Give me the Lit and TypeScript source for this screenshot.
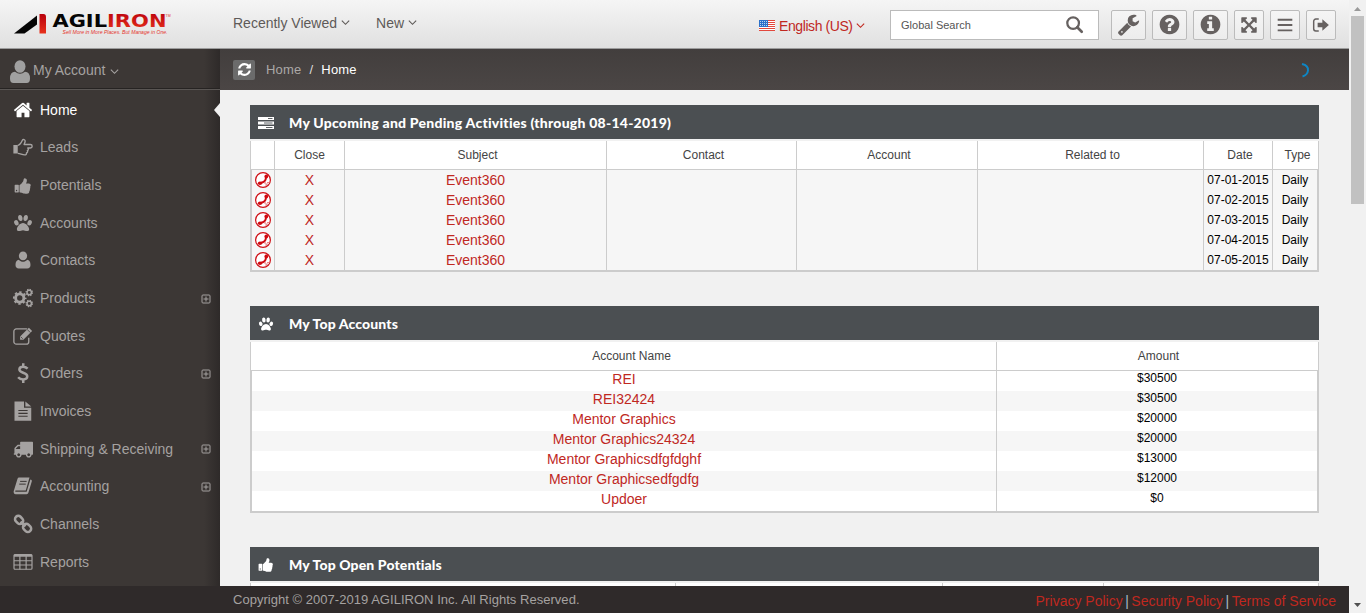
import { LitElement, html, css, svg } from "lit";
import { customElement } from "lit/decorators.js";

const fa = (d: string) => svg`<g transform="scale(.0089286)"><path d=${d}/></g>`;
const disc = "M1664 896q0 209-103 385.5t-279.5 279.5-385.5 103-385.5-103-279.5-279.5-103-385.5 103-385.5 279.5-279.5 385.5-103 385.5 103 279.5 279.5 103 385.5z";

// Every glyph is drawn on a 16 x 16 grid.
const icons: Record<string, unknown> = {
  home: fa("M1472 992v480q0 26-19 45t-45 19h-384v-384h-256v384h-384q-26 0-45-19t-19-45v-480q0-1 .5-3t.5-3l575-474 575 474q1 2 1 6zm223-69l-62 74q-8 9-21 11h-3q-13 0-21-7l-692-577-692 577q-12 8-24 7-13-2-21-11l-62-74q-8-10-7-23.5t11-21.5l719-599q32-26 76-26t76 26l244 204v-195q0-14 9-23t23-9h192q14 0 23 9t9 23v408l219 182q10 8 11 21.5t-7 23.5z"),
  user: svg`<ellipse cx="8" cy="4.700" rx="3.300" ry="3.600"/><path d="M2 12C2 9.200 3 8 4.700 7.800 5.700 8.900 6.800 9.400 8 9.400s2.300-.5 3.300-1.600C13 8 14 9.200 14 12c0 1.800-1 2.700-2.600 2.700H4.600C3 14.700 2 13.800 2 12z"/>`,
  thumb: fa("M320 1344q0-26-19-45t-45-19q-27 0-45.5 19t-18.5 45q0 27 18.5 45.500t45.500 18.500q26 0 45-18.500t19-45.500zm160-512v640q0 26-19 45t-45 19h-288q-26 0-45-19t-19-45v-640q0-26 19-45t45-19h288q26 0 45 19t19 45zm1184 0q0 86-55 149 15 44 15 76 3 76-43 137 17 56 0 117-15 57-54 94 9 112-49 181-64 76-197 78h-129q-66 0-144-15.500t-121.500-29-120.500-39.500q-123-43-158-44-26-1-45-19.500t-19-44.500v-641q0-25 18-43.500t43-20.500q24-2 76-59t101-121q68-87 101-120 18-18 31-48t17.500-48.500 13.500-60.500q7-39 12.500-61t19.500-52 34-50q19-19 45-19 46 0 82.500 10.500t60 26 40 40.500 24 45 12 50 5 45 .5 39q0 38-9.500 76t-19 60-27.500 56q-3 6-10 18t-11 22-8 24h277q78 0 135 57t57 135z"),
  truck: fa("M640 1408q0-52-38-90t-90-38-90 38-38 90 38 90 90 38 90-38 38-90zm-384-512h384v-256h-158q-13 0-22 9l-195 195q-9 9-9 22v30zm1280 512q0-52-38-90t-90-38-90 38-38 90 38 90 90 38 90-38 38-90zm256-1088v1024q0 15-4 26.5t-13.5 18.5-16.5 11.5-23.5 6-22.5 2-25.5 0-22.5-.5q0 106-75 181t-181 75-181-75-75-181h-384q0 106-75 181t-181 75-181-75-75-181h-64q-3 0-22.5.5t-25.5 0-22.5-2-23.5-6-16.5-11.5-13.5-18.5-4-26.5q0-26 19-45t45-19v-320q0-8-.5-35t0-38 2.5-34.5 6.5-37 14-30.5 22.5-30l198-198q19-19 50.5-32t58.5-13h160v-192q0-26 19-45t45-19h1024q26 0 45 19t19 45z"),
  wrench: fa("M448 1472q0-26-19-45t-45-19-45 19-19 45 19 45 45 19 45-19 19-45zm644-420l-682 682q-37 37-90 37-52 0-91-37l-106-108q-38-36-38-90 0-53 38-91l681-681q39 98 114.5 173.5t173.5 114.5zm634-435q0 39-23 106-47 134-164.5 217.5t-258.5 83.5q-185 0-316.5-131.5t-131.5-316.5 131.5-316.5 316.5-131.5q58 0 121.5 16.5t107.5 46.5q16 11 16 28t-16 28l-293 169v224l193 107q5-3 79-48.5t135.5-81 70.5-35.5q15 0 23.5 10t8.5 25z"),
  question: fa("M1024 1376v-192q0-14-9-23t-23-9h-192q-14 0-23 9t-9 23v192q0 14 9 23t23 9h192q14 0 23-9t9-23zm256-672q0-88-55.5-163t-138.5-116-170-41q-243 0-371 213-15 24 8 42l132 100q7 6 19 6 16 0 25-12 53-68 86-92 34-24 86-24 48 0 85.5 26t37.5 59q0 38-20 61t-68 45q-63 28-115.5 86.5t-52.5 125.5v36q0 14 9 23t23 9h192q14 0 23-9t9-23q0-19 21.5-49.5t54.5-49.5q32-18 49-28.5t46-35 44.5-48 28-60.5 12.5-81z" + disc),
  info: fa("M1152 1376v-160q0-14-9-23t-23-9h-96v-512q0-14-9-23t-23-9h-320q-14 0-23 9t-9 23v160q0 14 9 23t23 9h96v320h-96q-14 0-23 9t-9 23v160q0 14 9 23t23 9h448q14 0 23-9t9-23zm-128-896v-160q0-14-9-23t-23-9h-192q-14 0-23 9t-9 23v160q0 14 9 23t23 9h192q14 0 23-9t9-23z" + disc),
  expand: fa("M1411 541l-355 355 355 355 144-144q29-31 70-14 39 17 39 59v448q0 26-19 45t-45 19h-448q-42 0-59-40-17-39 14-69l144-144-355-355-355 355 144 144q31 30 14 69-17 40-59 40h-448q-26 0-45-19t-19-45v-448q0-42 40-59 39-17 69 14l144 144 355-355-355-355-144 144q-19 19-45 19-12 0-24-5-40-17-40-59v-448q0-26 19-45t45-19h448q42 0 59 40 17 39-14 69l-144 144 355 355 355-355-144-144q-31-30-14-69 17-40 59-40h448q26 0 45 19t19 45v448q0 42-39 59-13 5-25 5-26 0-45-19z"),
  search: svg`<circle cx="6.700" cy="6.700" r="5.500" fill="none" stroke="currentColor" stroke-width="2.100"/><path d="M10.600 10.600l4.200 4.200" stroke="currentColor" stroke-width="2.500" stroke-linecap="round"/>`,
  refresh: fa("M1639 1056q0 5-1 7-64 268-268 434.5t-478 166.5q-146 0-282.5-55t-243.5-157l-129 129q-19 19-45 19t-45-19-19-45v-448q0-26 19-45t45-19h448q26 0 45 19t19 45-19 45l-137 137q71 66 161 102t187 36q134 0 250-65t186-179q11-17 53-117 8-23 30-23h192q13 0 22.5 9.5t9.5 22.5zm25-800v448q0 26-19 45t-45 19h-448q-26 0-45-19t-19-45 19-45l138-138q-148-137-349-137-134 0-250 65t-186 179q-11 17-53 117-8 23-30 23h-199q-13 0-22.5-9.5t-9.5-22.5v-7q65-268 270-434.5t480-166.5q146 0 284 55.5t245 156.5l130-129q19-19 45-19t45 19 19 45z"),
  hand: svg`<path d="M.3 6.400H3.800v6.800H.3z"/><g fill="none" stroke="currentColor" stroke-width="1.100" stroke-linejoin="round"><path d="M3.800 6.700C5.500 6.400 6.600 4.600 7.500 2.600c.5-1 2.500-.8 2.200.9-.1 1-.8 1.900-.8 2.500h5c1.900 0 1.900 2.700 0 2.800h-2.100c.8.8.5 1.800-.3 2.100.5.9.1 1.600-.7 1.900.1 1-.4 1.500-1.500 1.500C7.200 14.300 6 13.200 3.800 13.100"/></g>`,
  paw: svg`<ellipse cx="2.700" cy="7.800" rx="1.700" ry="2.250" transform="rotate(-22 2.700 7.800)"/><ellipse cx="13.300" cy="7.800" rx="1.700" ry="2.250" transform="rotate(22 13.300 7.800)"/><ellipse cx="5.850" cy="4" rx="1.750" ry="2.500" transform="rotate(-8 5.850 4)"/><ellipse cx="10.150" cy="4" rx="1.750" ry="2.500" transform="rotate(8 10.150 4)"/><path d="M8 7.900c2.400 0 4.900 3.100 4.900 5 0 1.300-.9 1.500-1.700 1.500-1.200 0-2.100-.7-3.200-.7s-2 .7-3.200.7c-.9 0-1.700-.3-1.700-1.500 0-1.900 2.500-5 4.900-5z"/>`,
  cogs: svg`<g fill="none" stroke="currentColor"><circle cx="5.400" cy="8" r="3.300" stroke-width="2.300"/><circle cx="5.400" cy="8" r="4.700" stroke-width="1.500" stroke-dasharray="1.900 1.790" stroke-dashoffset=".95"/><circle cx="13" cy="3.600" r="1.750" stroke-width="1.200"/><circle cx="13" cy="3.600" r="2.550" stroke-width="1" stroke-dasharray="1.100 .9"/><circle cx="13" cy="12.400" r="1.750" stroke-width="1.200"/><circle cx="13" cy="12.400" r="2.550" stroke-width="1" stroke-dasharray="1.100 .9"/></g>`,
  edit: svg`<path d="M12.600 9.300v3.200a2 2 0 0 1-2 2H2.700a2 2 0 0 1-2-2V4.300a2 2 0 0 1 2-2h7.900l.8.200" fill="none" stroke="currentColor" stroke-width="1.050"/><path d="M5.700 8.300L12.700 1.300l2.600 2.600-7 7H5.700z"/><path d="M6.300 8.700l1.500 1.500M11.300 2.700l2.600 2.600" stroke="#3c3735" stroke-width=".6"/>`,
  dollar: svg`<g fill="none" stroke="currentColor" stroke-width="2"><path d="M11.700 4.500C10.700 3.500 9.500 3 8 3c-1.800 0-2.900.9-2.900 2.200 0 3.200 6.300 1.900 6.300 5.400 0 1.500-1.300 2.500-3.300 2.500-1.600 0-3-.6-4-1.700M8.200.2v3M8.200 13v3"/></g>`,
  file: svg`<path d="M1.200.3h7.600v5h5.800v10.500H1.200z"/><path d="M9.900.3l4.700 4H9.900z"/><path d="M4.300 7.600h7.400M4.300 9.900h7.400M4.300 12.200h7.400" stroke="#3c3735" stroke-width=".9"/>`,
  book: svg`<path d="M5 1.200h8.200l-3 10.300H2.400C1.800 11.500 1.500 12 2 12.600h8.900l3-9.800c1 .2 1.400.7 1.100 1.600l-2.700 9c-.2.700-.7 1.100-1.400 1.100H2.200C.9 14.500.2 13 .6 11.900L3.500 2.500C3.700 1.700 4.200 1.200 5 1.200z"/><path d="M5.700 4.300h5.200M5 6.500h5.200" stroke="#3c3735" stroke-width=".8"/>`,
  link: svg`<g fill="none" stroke="currentColor" stroke-width="2" transform="rotate(45 8 8)"><rect x="0" y="5.300" width="7" height="5.200" rx="2.500"/><rect x="9" y="5.300" width="7" height="5.200" rx="2.500"/><path d="M5.200 8h5.600"/></g>`,
  table: svg`<g fill="none" stroke="currentColor" stroke-width=".95"><rect x=".8" y="2" width="14.400" height="11.800" rx=".8"/><path d="M.8 2.900h14.400" stroke-width="1.800"/><path d="M.8 7h14.400M.8 10.400h14.400M5.500 3v11M10.500 3v11"/></g>`,
  tasks: svg`<path d="M0 2h16v3H0zM0 6.500h16v3H0zM0 11h16v3H0z"/><path d="M10 3.500h4.500M6 8h8.500M8 12.500h6.500" stroke="#4b4f52" stroke-width=".9"/>`,
  bars: svg`<path d="M1.500 2.500h13v1.700h-13zM1.500 7.200h13v1.700h-13zM1.500 11.900h13v1.700h-13z"/>`,
  exit: svg`<path d="M6 2.700H3.400A1.900 1.900 0 0 0 1.500 4.600v6.800a1.900 1.900 0 0 0 1.900 1.900H6" fill="none" stroke="currentColor" stroke-width="1.300"/><path d="M5 6h4.200V2.900L15 8l-5.800 5.100V10H5z"/>`,
  plus: svg`<g fill="none" stroke="currentColor" stroke-width="1.600"><rect x="1.600" y="1.600" width="12.800" height="12.800" rx="1.500"/><path d="M8 4v8M4 8h8"/></g>`,
  chev: svg`<path d="M1.500 4.500L8 11.200l6.500-6.700" fill="none" stroke="currentColor" stroke-width="2"/>`,
  phone: svg`<circle cx="8" cy="8" r="7.400" fill="#fff" stroke="#cf1016" stroke-width="1.200"/><g fill="#cf0a10"><ellipse cx="11.300" cy="4.600" rx="1.900" ry="2"/><ellipse cx="5" cy="11.300" rx="2.200" ry="1.800"/></g><path d="M11 5.500C10.800 8.500 9 10.300 6 10.800" fill="none" stroke="#cf0a10" stroke-width="2"/><path d="M9.500 11h1.200M11.500 12h1M10.500 13h1M12.500 10.500h1" stroke="#cf1016" stroke-width="1"/>`,
};
const icon = (n: string, cls = "") => html`<svg class="ic ${cls}" viewBox="0 0 16 16" fill="currentColor">${icons[n]}</svg>`;

const nav: [string, string, boolean?][] = [
  ["home", "Home"], ["hand", "Leads"], ["thumb", "Potentials"], ["paw", "Accounts"], ["user", "Contacts"],
  ["cogs", "Products", true], ["edit", "Quotes"], ["dollar", "Orders", true], ["file", "Invoices"],
  ["truck", "Shipping & Receiving", true], ["book", "Accounting", true], ["link", "Channels"], ["table", "Reports"],
];
const accounts = [["REI", "$30500"], ["REI32424", "$30500"], ["Mentor Graphics", "$20000"], ["Mentor Graphics24324", "$20000"], ["Mentor Graphicsdfgfdghf", "$13000"], ["Mentor Graphicsedfgdfg", "$12000"], ["Updoer", "$0"]];

@customElement("app-root")
export class AppRoot extends LitElement {
  static styles = css`
    :host { display: flex; width: 1366px; height: 613px; overflow: hidden; font: 14px/20px "Liberation Sans", Arial, sans-serif; color: #000; }
    * { box-sizing: border-box; }
    .ic { display: block; width: 16px; height: 16px; flex: none; overflow: visible; }
    .page { width: 1349px; display: flex; flex-direction: column; }
    .top { height: 49px; flex: none; display: flex; align-items: center; background: linear-gradient(#f5f5f5, #e0e0e0); border-bottom: 1px solid #9c9c9c; color: #5e5a58; }
    .logo { width: 172px; height: 48px; margin-right: 61px; flex: none; overflow: visible; }
    .drop { display: flex; align-items: center; gap: 4px; padding-bottom: 3px; white-space: nowrap; }
    .drop .ic { width: 9px; height: 9px; }
    .new { margin-left: 26px; }
    .lang { margin-left: 342px; color: #c0281f; padding: 3px 0 0; width: 104px; }
    .lang span { letter-spacing: -.42px; }
    .lang .ic { margin-left: -1px; }
    .flag { width: 16px; height: 11px; flex: none; }
    .find { width: 209px; height: 30px; margin: 1px 12px 0 27px; padding: 0 15px 0 10px; background: #fff; border: 1px solid #bbb; display: flex; align-items: center; justify-content: space-between; font-size: 11px; color: #555; }
    .find .ic { width: 17px; height: 17px; color: #666160; }
    .tools { display: flex; gap: 6px; margin-top: 1px; color: #666160; }
    .btn { width: 30px; height: 30px; border: 1px solid #bbb; border-radius: 2px; display: grid; place-items: center; background: linear-gradient(#f5f5f5, #ececec); }
    .btn.lg { width: 35px; }
    .btn.lg .ic { width: 23px; height: 23px; }
    .btn .ic { width: 18px; height: 18px; }
    .mid { flex: 1; min-height: 0; display: flex; }
    .side { width: 220px; flex: none; background: linear-gradient(to right, transparent 204px, #2e2a29 220px), #3c3735; color: #a5a2a1; overflow: hidden; }
    .acct { height: 41px; padding: 1px 0 0 9px; display: flex; align-items: center; border-bottom: 1px solid #5a5654; box-shadow: inset 0 -1px #262322; }
    .acct .person { width: 22px; height: 24px; margin-right: 2px; margin-top: 5px; }
    .acct .chev { width: 9px; height: 9px; margin: 3px 0 0 5px; }
    .nav { padding-top: 1px; }
    .item { height: 37.67px; padding: 0 9px 0 13px; display: flex; align-items: center; position: relative; }
    .item:first-child { color: #fff; }
    .item .ic { width: 20px; height: 20px; margin-right: 7px; }
    .item .thumb-ic { width: 18px; height: 18px; margin: 1px 8px 0 1px; }
    .item .plus { width: 10px; height: 10px; margin: 1px 0 0 auto; }
    .tip { position: absolute; right: 0; top: 12px; width: 6px; height: 14px; background: #f1f1f1; clip-path: polygon(100% 0, 100% 100%, 0 50%); }
    .main { flex: 1; background: #f1f1f1; overflow: hidden; }
    .crumbs { height: 41px; display: flex; align-items: center; padding: 0 39px 0 13px; background: linear-gradient(#423e3d, #4b4645); color: #aba8a7; font-size: 13px; letter-spacing: .2px; }
    .ref { width: 22px; height: 20px; margin-right: 11px; background: #6b6b6b; border-radius: 2px; display: grid; place-items: center; color: #fff; }
    .ref .ic { width: 15px; height: 15px; }
    .slash { margin: 0 8px; color: #ddd; }
    .cur { color: #fff; }
    .spin { width: 10px; height: 16px; margin-left: auto; }
    .panels { padding: 15px 30px; display: flex; flex-direction: column; gap: 34px; }
    .hd { height: 34px; background: #4b4f52; color: #fff; display: flex; align-items: center; padding: 2px 0 0 8px; gap: 15px; margin-bottom: 2px; }
    .hd .ic { margin-top: -1px; }
    .ttl { font: 900 14px/20px Lato, sans-serif; letter-spacing: .12px; white-space: nowrap; }
    .act .ttl { letter-spacing: .235px; }
    .head, .row { display: grid; text-align: center; }
    .head { height: 29px; background: #fff; border-left: 1px solid #ccc; border-bottom: 1px solid #ccc; font-size: 12px; line-height: 28px; color: #444; }
    .head > div { border-right: 1px solid #ccc; padding-left: 4px; }
    .head > .close { padding-left: 0; }
    .head > .name { padding-left: 16px; }
    .body { border: 2px solid #ccc; border-top: 0; }
    .row { height: 20px; font-size: 12px; }
    .row > div { border-right: 1px solid #ccc; white-space: nowrap; }
    .row > div:last-child { border-right: 0; }
    .act .head { grid-template-columns: 24px 70px 262px 190px 181px 226px 69px 46px; }
    .act .row { grid-template-columns: 23px 70px 262px 190px 181px 226px 69px 44px; background: #f6f6f6; }
    .act .phone { margin: 2px 0 0 3px; }
    .top2 .head { grid-template-columns: 746px 322px; }
    .top2 .head > div:last-child { padding-left: 2px; }
    .top2 .row { grid-template-columns: 745px 320px; line-height: 15px; background: #fff; }
    .top2 .row:nth-child(even) { background: #f6f6f6; }
    .pot .head { grid-template-columns: 425px 267px 161px 215px; }
    .red { color: #c0281f; font-size: 14px; }
    .top2 .red { line-height: 17px; }
    .foot { height: 27px; flex: none; background: #2f2a2a; color: #a5a2a1; padding: 0 13px 0 233px; display: flex; justify-content: space-between; line-height: 27px; }
    .copy { font-size: 13px; letter-spacing: .03px; }
    .links { padding-top: 2px; }
    .links .bar { color: #a8bcc8; margin: 0 2.500px; }
    .bar2 { width: 17px; background: #f1f1f1; padding: 7px 2px 6px; display: flex; flex-direction: column; align-items: center; }
    .arr { width: 7px; height: 4px; background: #999; clip-path: polygon(50% 0, 100% 100%, 0 100%); }
    .arr.down { background: #505050; clip-path: polygon(0 0, 100% 0, 50% 100%); margin-top: auto; }
    .thumb { width: 13px; height: 188px; margin-top: 5px; background: #c1c1c1; }
  `;

  private logo() {
    return html`<svg class="logo" viewBox="0 0 172 48">
      <defs><linearGradient id="r" x1="0" y1="0" x2="0" y2="1"><stop offset="0" stop-color="#b8000c"/><stop offset="1" stop-color="#e8321c"/></linearGradient></defs>
      <path d="M14 33.500L37 15.500v9L24.500 33.500z" fill="#050505"/><path d="M39.500 14H43.500q2.500 0 2.500 3V33.500h-6.500z" fill="url(#r)"/>
      <g font-family="DejaVu Sans" font-weight="700" font-size="17">
        <text x="52.500" y="27" textLength="54.500" lengthAdjust="spacingAndGlyphs" fill="#050505">AGIL</text>
        <text x="107" y="27" textLength="59.500" lengthAdjust="spacingAndGlyphs" fill="url(#r)">IRON</text></g>
      <g font-family="Liberation Sans" fill="#e5332b"><text x="62.500" y="33.500" font-size="5.500" font-style="italic" textLength="105" lengthAdjust="spacingAndGlyphs">Sell More in More Places. But Manage in One.</text>
      <text x="165.500" y="17" font-size="3.500">TM</text></g>
    </svg>`;
  }

  private flag() {
    return html`<svg class="flag" viewBox="0 0 16 11"><path d="M0 0h16v11H0z" fill="#fff"/><path d="M0 .5h16M0 2.500h16M0 4.500h16M0 6.500h16M0 8.500h16M0 10.500h16" stroke="#e2483d" stroke-width="1"/><path d="M0 0h9v7H0z" fill="#2c71c9"/><path d="M1 1.500h8M1 3.500h8M1 5.500h8" stroke="#dcebff" stroke-width=".8" stroke-dasharray="1 1"/></svg>`;
  }

  render() {
    return html`
      <div class="page">
        <header class="top">
          ${this.logo()}
          <div class="drop">Recently Viewed ${icon("chev")}</div>
          <div class="drop new">New ${icon("chev")}</div>
          <div class="drop lang">${this.flag()}<span>English (US)</span>${icon("chev")}</div>
          <div class="find"><span>Global Search</span>${icon("search")}</div>
          <div class="tools">
            ${["wrench", "question", "info"].map((n) => html`<div class="btn lg">${icon(n)}</div>`)}
            ${["expand", "bars", "exit"].map((n) => html`<div class="btn">${icon(n)}</div>`)}
          </div>
        </header>
        <div class="mid">
          <aside class="side">
            <div class="acct"><svg class="person" viewBox="0 0 22 24" fill="#a0a0a0"><ellipse cx="11" cy="6.500" rx="5.500" ry="6.300"/><path d="M1 18.500Q1 12 6 11.800Q11 15.500 16 11.800Q21 12 21 18.500Q21 23 17.500 23H4.500Q1 23 1 18.500z"/></svg>My Account ${icon("chev", "chev")}</div>
            <nav class="nav">${nav.map(([i, t, p], k) => html`<div class="item">${icon(i, i === "thumb" ? "thumb-ic" : "")}<span>${t}</span>${p ? icon("plus", "plus") : ""}${k === 0 ? html`<i class="tip"></i>` : ""}</div>`)}</nav>
          </aside>
          <main class="main">
            <div class="crumbs"><span class="ref">${icon("refresh")}</span>Home<span class="slash">/</span><span class="cur">Home</span>
              <svg class="spin" viewBox="0 0 10 16"><path d="M2 2Q8.500 3.500 8 8.500Q7.500 13 2.500 14.500" fill="none" stroke="#0e86c4" stroke-width="2"/></svg></div>
            <div class="panels">
              <section class="act">
                <div class="hd">${icon("tasks")}<span class="ttl">My Upcoming and Pending Activities (through 08-14-2019)</span></div>
                <div class="head"><div></div><div class="close">Close</div>${["Subject", "Contact", "Account", "Related to", "Date", "Type"].map((h) => html`<div>${h}</div>`)}</div>
                <div class="body">${[1, 2, 3, 4, 5].map((d) => html`<div class="row"><div>${icon("phone", "phone")}</div><div class="red">X</div><div class="red">Event360</div><div></div><div></div><div></div><div>07-0${d}-2015</div><div>Daily</div></div>`)}</div>
              </section>
              <section class="top2">
                <div class="hd">${icon("paw")}<span class="ttl">My Top Accounts</span></div>
                <div class="head"><div class="name">Account Name</div><div>Amount</div></div>
                <div class="body">${accounts.map(([n, a]) => html`<div class="row"><div class="red">${n}</div><div>${a}</div></div>`)}</div>
              </section>
              <section class="pot">
                <div class="hd">${icon("thumb")}<span class="ttl">My Top Open Potentials</span></div>
                <div class="head"><div></div><div></div><div></div><div></div></div>
              </section>
            </div>
          </main>
        </div>
        <footer class="foot"><span class="copy">Copyright © 2007-2019 AGILIRON Inc. All Rights Reserved.</span>
          <span class="links red">Privacy Policy<span class="bar">|</span>Security Policy<span class="bar">|</span>Terms of Service</span></footer>
      </div>
      <div class="bar2"><i class="arr"></i><i class="thumb"></i><i class="arr down"></i></div>`;
  }
}
